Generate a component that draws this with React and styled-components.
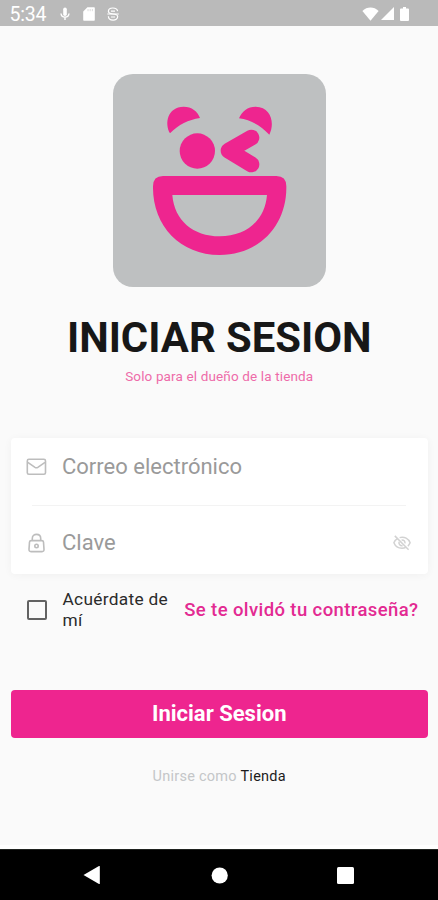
import React from 'react'
import styled, { createGlobalStyle } from "styled-components"

const pink = "#ee258f";

const GlobalStyle = createGlobalStyle`
    * {
        box-sizing: border-box;
    }

    body {
        margin: 0;
        background: #fafafa;
        font-family: Roboto, "Liberation Sans", sans-serif;
    }

    svg {
        display: block;
    }
`

const Screen = styled.div`
    width: 100%;
    height: 900px;
    display: flex;
    flex-direction: column;
    background: #fafafa;
    overflow: hidden;
`

const StatusBar = styled.header`
    height: 26px;
    flex: none;
    display: flex;
    align-items: center;
    justify-content: space-between;
    padding: 1px 29.5px 0 9.5px;
    background: #bababa;
    color: #fff;
`

const StatusGroup = styled.div`
    display: flex;
    align-items: center;
    gap: ${props => props.$gap}px;
`

const Clock = styled.span`
    width: 37px;
    margin: 3px 1px 0 0;
    font-size: 19.5px;
    line-height: 24px;
    letter-spacing: -0.2px;
    white-space: nowrap;
`

const BatterySlot = styled.span`
    margin-left: 4px;
`

const Content = styled.main`
    flex: 1;
    display: flex;
    flex-direction: column;
    align-items: center;
    padding: 48px 10.5px 0 11px;
    border-bottom: 4px solid #fff;
`

const Logo = styled.div`
    width: 213px;
    height: 213px;
    flex: none;
    border-radius: 20px;
    background: #bec0c1;
    overflow: hidden;
`

const Title = styled.h1`
    margin: 27px 0 0;
    font-size: 41.8px;
    font-weight: 700;
    line-height: 48px;
    color: #171717;
    white-space: nowrap;
`

const Subtitle = styled.p`
    margin: 5px 0 0;
    font-size: 13.5px;
    line-height: 18px;
    letter-spacing: 0.14px;
    color: #ee6ba9;
    white-space: nowrap;
`

const Card = styled.section`
    width: 100%;
    height: 136px;
    margin-top: 52.5px;
    flex: none;
    border-radius: 4px;
    background: #fff;
    box-shadow: 0 1px 9px rgba(0, 0, 0, 0.045);
`

const Field = styled.label`
    height: 67px;
    display: flex;
    align-items: center;
    padding: ${props => props.$pad} 17px ${props => props.$padBottom || "0"} 15px;
`

const FieldIcon = styled.span`
    width: 36px;
    flex: none;
`

const Placeholder = styled.span`
    flex: 1;
    font-size: 22px;
    line-height: 28px;
    color: #9a9a9a;
`

const Divider = styled.hr`
    height: 1px;
    margin: 0 22px 0 21px;
    border: 0;
    background: #f3f3f3;
`

const Options = styled.div`
    width: 100%;
    height: 42px;
    margin-top: 15.5px;
    display: flex;
    align-items: center;
    padding: 0 9px 0 15.5px;
`

const Checkbox = styled.span`
    width: 20px;
    height: 20px;
    flex: none;
    border: 2px solid #626262;
    border-radius: 2px;
`

const Remember = styled.span`
    width: 112px;
    margin-left: 16px;
    font-size: 17.3px;
    line-height: 21px;
    letter-spacing: 0.3px;
    color: #2b2b2b;
`

const Forgot = styled.a`
    margin-left: auto;
    font-size: 18.5px;
    font-weight: 500;
    line-height: 24px;
    letter-spacing: 0.4px;
    color: #e32a92;
    white-space: nowrap;
`

const SubmitButton = styled.button`
    width: 100%;
    height: 48px;
    margin-top: 59px;
    padding: 0;
    flex: none;
    border: 0;
    border-radius: 4px;
    background: ${pink};
    color: #fff;
    font-family: inherit;
    font-size: 22px;
    font-weight: 700;
    line-height: 28px;
`

const Footer = styled.p`
    margin: 30px 0 0;
    font-size: 14.5px;
    line-height: 18px;
    letter-spacing: 0.26px;
    color: #c4c6c8;
    white-space: nowrap;
`

const StoreLink = styled.a`
    color: #1c1c1c;
`

const NavBar = styled.nav`
    height: 51px;
    flex: none;
    display: flex;
    align-items: center;
    justify-content: space-between;
    padding: 0 84px 0 83px;
    background: #000;
    border-top: 1px solid #202320;
`

const MicIcon = () => (
    <svg width="10" height="14" viewBox="0 0 10 14">
        <rect x="3.2" y="0.5" width="3.6" height="8.5" rx="1.8" fill="#fff" />
        <path d="M1 6.5 C1.3 11.3 8.7 11.3 9 6.5 M5 10 V13" fill="none" stroke="#fff" strokeWidth="1.4" />
    </svg>
)

const SdCardIcon = () => (
    <svg width="12" height="14" viewBox="0 0 12 14">
        <path d="M4.4 0.3 H11 Q11.8 0.3 11.8 1.1 V13 Q11.8 13.8 11 13.8 H1 Q0.2 13.8 0.2 13 V4.5 Z" fill="#fff" />
        <path d="M5 2 V4.2 M7.2 2 V4.2 M9.4 2 V4.2" stroke="#d8d8d8" strokeWidth="0.9" />
    </svg>
)

const DebugIcon = () => (
    <svg width="12" height="14" viewBox="0 0 12 14" fill="none" stroke="#fff" strokeWidth="1.2">
        <path d="M10.6 4.2 C10 -0.1 1.4 -0.1 1.4 4.3 C1.4 6.6 3.2 6.8 6 7 C9 7.2 10.7 7.5 10.7 9.6 C10.7 14.3 1.5 14.3 1.4 9.2" />
        <path d="M0.3 7 H11.8 M4 4.2 H8 M4 10 H8" />
    </svg>
)

const WifiIcon = () => (
    <svg width="17" height="14" viewBox="0 0 17 14">
        <path d="M0.4 4 C5 -0.6 12 -0.6 16.6 4 L8.5 13.8 Z" fill="#fff" />
    </svg>
)

const SignalIcon = () => (
    <svg width="13" height="13" viewBox="0 0 13 13">
        <path d="M13 0 V13 H0 Z" fill="#fff" />
    </svg>
)

const BatteryIcon = () => (
    <svg width="9" height="14" viewBox="0 0 9 14">
        <path d="M3 0 H6 V1.4 H8 Q9 1.4 9 2.4 V13 Q9 14 8 14 H1 Q0 14 0 13 V2.4 Q0 1.4 1 1.4 H3 Z" fill="#fff" />
    </svg>
)

const LaughingFace = () => (
    <svg width="213" height="213" viewBox="24 27 639 639" fill={pink}>
        <path d="M195 205 C178 175 187 126 236 125 C260 125 278 139 285 159 C250 164 221 179 195 205 Z" />
        <path d="M493 209 C510 175 499 126 452 125 C428 125 410 139 402 160 C438 165 467 182 493 209 Z" />
        <circle cx="277" cy="258" r="53" />
        <path d="M439 218 L371 257 L439 298" fill="none" stroke={pink} strokeWidth="48" strokeLinecap="round" strokeLinejoin="round" />
        <path
            fillRule="evenodd"
            d="M174 333 H514 Q544 333 544 364 C546 480 464 570 344 570 C224 570 142 480 144 364 Q144 333 174 333 Z
               M202 390 C208 466 264 514 344 514 C424 514 480 466 486 390 Z"
        />
    </svg>
)

const MailIcon = () => (
    <svg width="21" height="18" viewBox="0 0 21 18" fill="none" stroke="#bdbdbd" strokeWidth="1.6">
        <rect x="1.3" y="1.3" width="18.2" height="15" rx="1.6" />
        <path d="M1.8 4.3 L9 9.3 Q10.4 10.2 11.8 9.3 L19 4.3" />
    </svg>
)

const LockIcon = () => (
    <svg width="21" height="20" viewBox="0 0 21 20" fill="none" stroke="#bdbdbd" strokeWidth="1.6">
        <path d="M5.1 7.6 H15.9 Q17.3 7.6 17.5 9 L18 16.4 Q18.1 18.6 16 18.6 H5 Q2.9 18.6 3 16.4 L3.5 9 Q3.7 7.6 5.1 7.6 Z" />
        <path d="M6.3 7.4 V5.5 C6.3 0 14.7 0 14.7 5.5 V7.4" />
        <circle cx="10.5" cy="13" r="1.7" />
    </svg>
)

const EyeOffIcon = () => (
    <svg width="18" height="16" viewBox="0 0 18 16" fill="none" stroke="#d2d2d2" strokeWidth="1.5">
        <path d="M4.8 3.3 C2.8 4.3 1.5 6 0.9 7.8 C2.4 11.5 5.5 13.2 9 13.2 C10.5 13.2 11.6 13 12.8 12.4" />
        <path d="M6.6 2.6 C11.5 1.3 15.6 3.7 17.1 7.8 C16.6 9.2 15.8 10.2 14.9 11.1" />
        <path d="M8.6 4.9 C10.8 4.7 12.2 6.4 12 8.3 M6.1 6.8 C5.4 9 7.2 11.2 9.6 10.8" />
        <path d="M1.8 0.9 L15.6 14.7" />
    </svg>
)

const App = () => {
    return (
        <>
            <GlobalStyle />
            <Screen>
                <StatusBar>
                    <StatusGroup $gap={12.5}>
                        <Clock>5:34</Clock>
                        <MicIcon />
                        <SdCardIcon />
                        <DebugIcon />
                    </StatusGroup>
                    <StatusGroup $gap={2}>
                        <WifiIcon />
                        <SignalIcon />
                        <BatterySlot><BatteryIcon /></BatterySlot>
                    </StatusGroup>
                </StatusBar>

                <Content>
                    <Logo>
                        <LaughingFace />
                    </Logo>
                    <Title>INICIAR SESION</Title>
                    <Subtitle>Solo para el dueño de la tienda</Subtitle>

                    <Card>
                        <Field $pad="0" $padBottom="8px">
                            <FieldIcon><MailIcon /></FieldIcon>
                            <Placeholder>Correo electrónico</Placeholder>
                        </Field>
                        <Divider />
                        <Field $pad="8px">
                            <FieldIcon><LockIcon /></FieldIcon>
                            <Placeholder>Clave</Placeholder>
                            <EyeOffIcon />
                        </Field>
                    </Card>

                    <Options>
                        <Checkbox />
                        <Remember>Acuérdate de mí</Remember>
                        <Forgot>Se te olvidó tu contraseña?</Forgot>
                    </Options>

                    <SubmitButton>Iniciar Sesion</SubmitButton>
                    <Footer>
                        Unirse como <StoreLink>Tienda</StoreLink>
                    </Footer>
                </Content>

                <NavBar>
                    <svg width="17" height="20" viewBox="0 0 17 20">
                        <path d="M0.5 10 L16 1 Q16.8 0.8 16.8 1.6 V18.4 Q16.8 19.2 16 19 Z" fill="#fff" />
                    </svg>
                    <svg width="18" height="17" viewBox="0 0 18 17">
                        <circle cx="9.7" cy="8.5" r="8.1" fill="#fff" />
                    </svg>
                    <svg width="17" height="17" viewBox="0 0 17 17">
                        <rect width="17" height="17" rx="1.5" fill="#fff" />
                    </svg>
                </NavBar>
            </Screen>
        </>
    )
}

export default App
